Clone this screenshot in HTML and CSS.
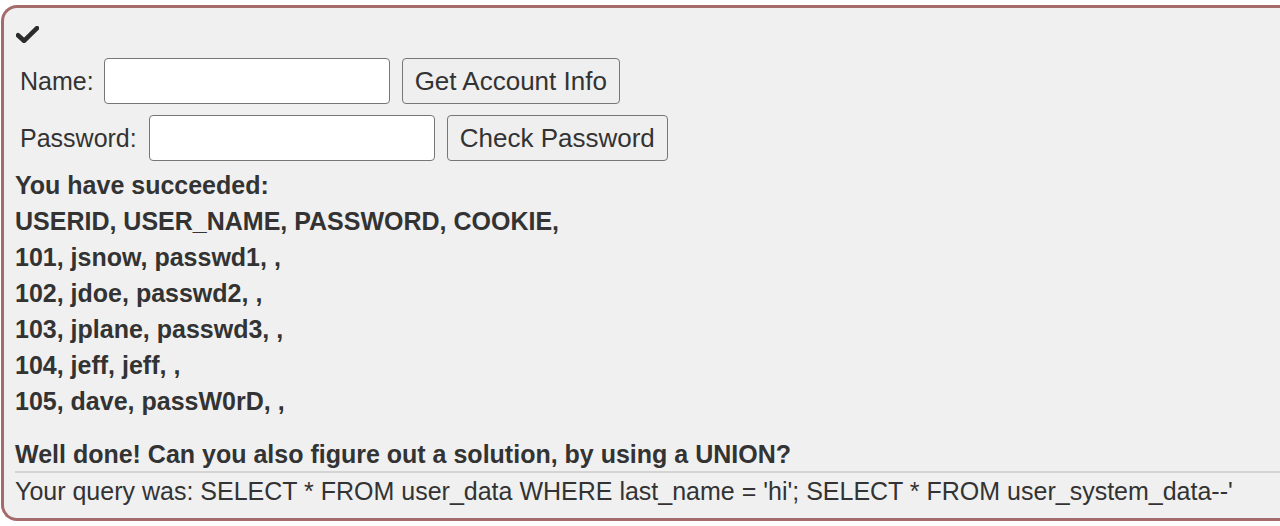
FILE: index.html
```html
<!DOCTYPE html>
<html>
<head>
<meta charset="utf-8">
<link rel="stylesheet" href="styles.css">
</head>
<body>
<div class="panel">
  <div class="check">
    <svg width="23" height="17" viewBox="0 0 23 17"><path d="M2 9.2 L8 14.8 L21 2.2" fill="none" stroke="#2b2b2b" stroke-width="4.6" stroke-linecap="round" stroke-linejoin="round"/></svg>
  </div>
  <div class="row">
    <label class="lbl">Name:</label>
    <input class="field name" type="text">
    <button class="btn">Get Account Info</button>
  </div>
  <div class="row">
    <label class="lbl">Password:</label>
    <input class="field" type="text">
    <button class="btn">Check Password</button>
  </div>
  <div class="result">
    <p class="narrow">You have succeeded:</p>
    <p>USERID, USER_NAME, PASSWORD, COOKIE,</p>
    <p>101, jsnow, passwd1, ,</p>
    <p>102, jdoe, passwd2, ,</p>
    <p>103, jplane, passwd3, ,</p>
    <p>104, jeff, jeff, ,</p>
    <p>105, dave, passW0rD, ,</p>
  </div>
  <div class="done">Well done! Can you also figure out a solution, by using a UNION?</div>
  <div class="query">Your query was: SELECT * FROM user_data WHERE last_name = 'hi'; SELECT * FROM user_system_data--'</div>
</div>
</body>
</html>
```
FILE: styles.css
```css
html, body {
  margin: 0;
  padding: 0;
  background: #ffffff;
  overflow: hidden;
}
body {
  font-family: "Liberation Sans", Arial, sans-serif;
  color: #333333;
  font-size: 25px;
}
.panel {
  margin: 5px 0 0 1px;
  width: 1279px;
  height: 516px;
  box-sizing: border-box;
  border: 3px solid #a56b6b;
  border-right: none;
  border-radius: 16px 0 0 16px;
  background: #f0f0f0;
  padding: 17px 0 0 11px;
}
.check {
  height: 22px;
  padding: 1px 0 0 1px;
}
.check svg {
  display: block;
}
.row {
  display: flex;
  align-items: center;
  gap: 12px;
  margin-top: 10px;
}
.row + .row {
  margin-top: 11px;
}
.lbl {
  margin-left: 5px;
  color: #333;
}
.field {
  width: 286px;
  height: 46px;
  box-sizing: border-box;
  border: 1px solid #767676;
  border-radius: 4px;
  background: #fff;
  font-size: 24px;
}
.field.name {
  margin-left: -2px;
}
.btn {
  height: 46px;
  box-sizing: border-box;
  border: 1px solid #777;
  border-radius: 4px;
  background: #efefef;
  color: #333;
  font-family: "Liberation Sans", Arial, sans-serif;
  font-size: 26px;
  padding: 0 12px;
}
.result {
  margin-top: 6px;
  font-weight: bold;
  line-height: 36px;
}
.result p {
  margin: 0;
}
.done {
  margin-top: 18px;
  font-weight: bold;
  line-height: 34px;
  border-bottom: 2px solid #d4d4d4;
}
.query {
  line-height: 36px;
}
```
